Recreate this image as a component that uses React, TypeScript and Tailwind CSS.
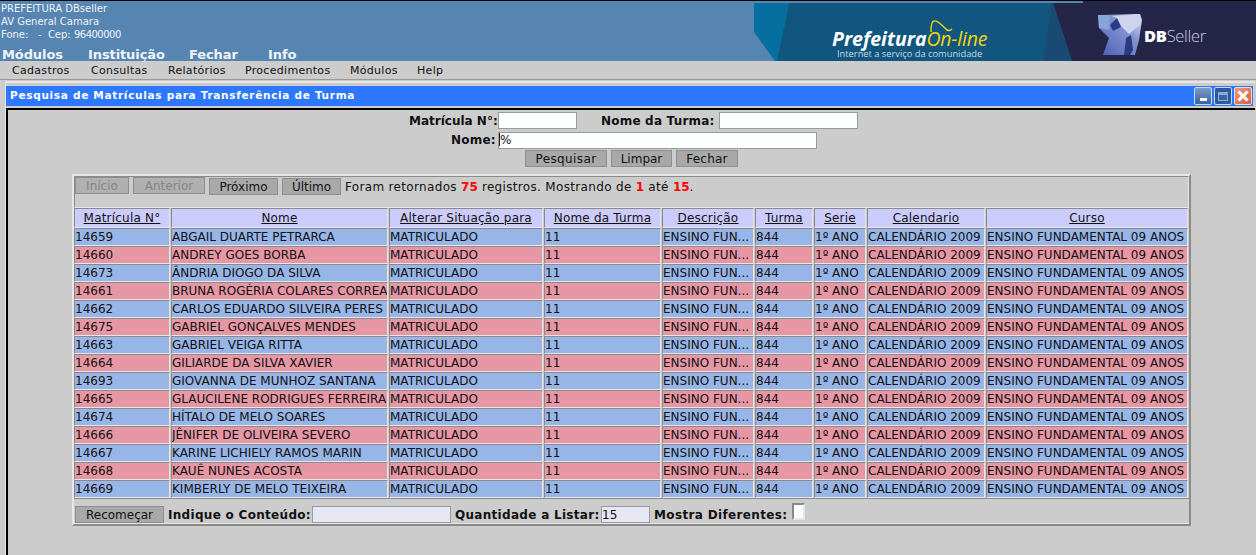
const rows = [
  ["14659", "ABGAIL DUARTE PETRARCA"],
  ["14660", "ANDREY GOES BORBA"],
  ["14673", "ÂNDRIA DIOGO DA SILVA"],
  ["14661", "BRUNA ROGÉRIA COLARES CORREA"],
  ["14662", "CARLOS EDUARDO SILVEIRA PERES"],
  ["14675", "GABRIEL GONÇALVES MENDES"],
  ["14663", "GABRIEL VEIGA RITTA"],
  ["14664", "GILIARDE DA SILVA XAVIER"],
  ["14693", "GIOVANNA DE MUNHOZ SANTANA"],
  ["14665", "GLAUCILENE RODRIGUES FERREIRA"],
  ["14674", "HÍTALO DE MELO SOARES"],
  ["14666", "JÊNIFER DE OLIVEIRA SEVERO"],
  ["14667", "KARINE LICHIELY RAMOS MARIN"],
  ["14668", "KAUÊ NUNES ACOSTA"],
  ["14669", "KIMBERLY DE MELO TEIXEIRA"],
];

const columns = [
  { label: "Matrícula N°", width: "w-[97px]" },
  { label: "Nome", width: "w-[218px]" },
  { label: "Alterar Situação para", width: "w-[155px]" },
  { label: "Nome da Turma", width: "w-[118px]" },
  { label: "Descrição", width: "w-[93px]" },
  { label: "Turma", width: "w-[59px]" },
  { label: "Serie", width: "w-[53px]" },
  { label: "Calendario", width: "w-[119px]" },
  { label: "Curso", width: "w-[203px]" },
];

function PageButton({ label, disabled, className }: { label: string; disabled?: boolean; className: string }) {
  return (
    <button
      className={`h-[17px] shrink-0 border border-[#8f8f8f] text-[12px] leading-none ${
        disabled ? "bg-[#b0b0b0] text-[#858585]" : "bg-[#a8a8a8] text-[#111]"
      } ${className}`}
    >
      {label}
    </button>
  );
}

function Banner() {
  return (
    <div className="relative h-full w-[502px] overflow-hidden bg-[#252647]">
      <svg className="absolute left-0 top-[-1px]" width="502" height="61" viewBox="0 0 502 61">
        <defs>
          <linearGradient id="dbLogo" x1="0" y1="1" x2="1" y2="0">
            <stop offset="0" stopColor="#4a5fb8" />
            <stop offset="0.6" stopColor="#7f90d0" />
            <stop offset="1" stopColor="#dfe3f5" />
          </linearGradient>
        </defs>
        <polygon points="0,0 298,0 318,61 0,61" fill="#11567f" />
        <polygon points="0,0 36,0 23,61 21,61 0,32" fill="#05709f" />
        <polygon points="0,32 21,61 0,61" fill="#5785b2" />
        <polygon points="298,3 318,61 289,61" fill="#1a4a73" />
        <rect x="0" y="0" width="329" height="3" fill="#5785b2" />
        {/* logo DBSeller */}
        <path d="M344 15 L386 14 L388 20 L385 40 L381 55 L349 55 L355 38 L345 28 Z" fill="url(#dbLogo)" />
        <path d="M344 15 L356 15 L355 30 L345 28 Z" fill="#86a5d8" />
        <path d="M358 16 L386 14 L387 24 L375 34 L367 26 L363 18 Z" fill="#cfd4ee" />
        <path d="M356 25 L363 18 L367 27 L359 31 Z" fill="#2b3a86" />
        <path d="M370 55 L372 38 L377 35 L379 50 L376 55 Z" fill="#2d3a7d" />
        {/* onda do On-line */}
        <path d="M177 32 C177 24 178 21 180 21 C184 20 188 26 193 30 C195 31 197 30 198 29" fill="none" stroke="#f2d411" strokeWidth="1.4" />
      </svg>
      <div className="absolute left-[78px] top-[29px] flex h-[18px] items-baseline font-['Open_Sans',sans-serif] italic leading-[18px]">
        <span className="text-[19.5px] font-bold text-white">Prefeitura</span>
        <span className="text-[19.5px] tracking-[-0.2px] text-[#f2d411]">On-line</span>
      </div>
      <p className="absolute left-[83px] top-[47px] font-['Open_Sans',sans-serif] text-[9.3px] leading-[11px] text-[#c8d8e0]">
        Internet a serviço da comunidade
      </p>
      <p className="absolute left-[390px] top-[26px] font-['Open_Sans',sans-serif] text-[16.5px] font-light leading-[18px] tracking-[-0.3px] text-[#c9cce0]">
        <span className="font-extrabold text-white">DB</span>Seller
      </p>
    </div>
  );
}

function WindowButtons() {
  return (
    <div className="flex gap-[2px] pr-[1px]">
      <div className="flex h-[18px] w-[18px] items-end justify-center rounded-[2px] border border-[#c8d8f0] bg-gradient-to-b from-[#7c9cc8] to-[#3d6299] pb-[3px]">
        <div className="h-[3px] w-[7px] bg-white" />
      </div>
      <div className="flex h-[18px] w-[18px] items-center justify-center rounded-[2px] border border-[#c8d8f0] bg-[#2d5a9e]">
        <div className="h-[9px] w-[10px] border border-t-[3px] border-[#8fa8cf] bg-[#3a64a6]" />
      </div>
      <div className="flex h-[18px] w-[18px] items-center justify-center rounded-[2px] border border-[#f0d8d0] bg-gradient-to-br from-[#ec9a7c] to-[#d9603f]">
        <svg width="14" height="14" viewBox="0 0 14 14">
          <path d="M2.5 2.5 L11.5 11.5 M11.5 2.5 L2.5 11.5" stroke="#fff" strokeWidth="3" />
        </svg>
      </div>
    </div>
  );
}

export default function App() {
  return (
    <div className="flex h-[555px] w-[1256px] flex-col overflow-hidden bg-[#cccccc] font-['DejaVu_Sans',sans-serif] text-black">
      {/* cabecalho */}
      <header className="flex h-[61px] shrink-0 justify-between border-t border-black bg-[#5785b2] text-white">
        <div className="pl-[1px]">
          <div className="pt-[1px] text-[10px] leading-[13px] text-[#eef3f8]">
            <p>PREFEITURA DBseller</p>
            <p>AV General Camara</p>
            <p className="whitespace-pre">
              Fone:&nbsp;&nbsp;&nbsp;-&nbsp;&nbsp;Cep: <span className="tracking-[-0.5px]">96400000</span>
            </p>
          </div>
          <nav className="mt-[6px] flex pl-[1px] text-[13px] font-bold leading-[15px] tracking-[-0.1px] text-[#eef3f8]">
            <span className="w-[86px]">Módulos</span>
            <span className="w-[101px]">Instituição</span>
            <span className="w-[79px]">Fechar</span>
            <span>Info</span>
          </nav>
        </div>
        <Banner />
      </header>

      {/* menu */}
      <nav className="flex h-[19px] shrink-0 items-center border-b border-[#9a9a9a] pl-[12px] pt-[3px] text-[11px] tracking-[0.3px] text-[#111]">
        <span className="w-[79px]">Cadastros</span>
        <span className="w-[77px]">Consultas</span>
        <span className="w-[77px]">Relatórios</span>
        <span className="w-[105px]">Procedimentos</span>
        <span className="w-[67px]">Módulos</span>
        <span>Help</span>
      </nav>

      {/* janela */}
      <main className="mt-[1px] mr-[1px] ml-[5px] flex min-h-0 flex-1 flex-col border-t-[2px] border-l border-[#e6e6e6] pt-[3px]">
        <div className="mr-[2px] flex h-[20px] shrink-0 items-center justify-between bg-[#2e78ff] pl-[4px] text-[10.5px] font-bold tracking-[0.7px] text-white">
          <span>Pesquisa de Matrículas para Transferência de Turma</span>
          <WindowButtons />
        </div>
        <div className="mt-[2px] flex flex-1 flex-col border-t-[2px] border-l-[2px] border-black pt-[2px]">
          <form className="flex flex-col text-[12px] font-bold text-[#111]">
            <div className="flex h-[19px] items-start pl-[401px]">
              <label className="w-[89px]">Matrícula N°:</label>
              <input className="h-[17px] w-[79px] border border-[#9a9a9a] bg-[#fbfffd]" />
              <label className="ml-[24px] w-[118px] tracking-[0.2px]">Nome da Turma:</label>
              <input className="h-[17px] w-[139px] border border-[#9a9a9a] bg-[#fbfffd]" />
            </div>
            <div className="flex h-[19px] items-start pl-[443px]">
              <label className="w-[47px] tracking-[0.2px]">Nome:</label>
              <div className="relative">
                <input
                  defaultValue="%"
                  className="h-[17px] w-[319px] border border-[#9a9a9a] bg-[#fbfffd] pl-[1px] text-[12px] font-normal leading-none"
                />
                <div className="absolute left-[1px] top-[2px] h-[13px] w-[1px] bg-[#222]" />
              </div>
            </div>
            <div className="flex gap-[4px] pl-[517px]">
              <PageButton label="Pesquisar" className="w-[82px] font-normal tracking-[0.4px]" />
              <PageButton label="Limpar" className="w-[61px] font-normal" />
              <PageButton label="Fechar" className="w-[62px] font-normal tracking-[0.2px]" />
            </div>
          </form>

          <section className="mt-[7px] ml-[64px] w-[1119px] border-[2px] border-t-[#e6e6e6] border-r-[#8a8a8a] border-b-[#8a8a8a] border-l-[#e6e6e6]">
            <div className="h-[32px] border-t border-l border-r border-b border-t-[#8a8a8a] border-r-[#e6e6e6] border-b-[#e6e6e6] border-l-[#8a8a8a]">
              <div className="flex items-start text-[12px] text-[#111]">
                <PageButton label="Início" disabled className="w-[54px]" />
                <PageButton label="Anterior" disabled className="ml-[4px] w-[72px]" />
                <PageButton label="Próximo" className="mt-[1px] ml-[4px] w-[69px]" />
                <PageButton label="Último" className="mt-[1px] ml-[4px] w-[59px]" />
                <p className="mt-[1px] ml-[4px] tracking-[0.33px]">
                  Foram retornados <b className="tracking-normal text-[#ff0000]">75</b> registros. Mostrando de{" "}
                  <b className="tracking-normal text-[#ff0000]">1</b> até{" "}
                  <b className="tracking-normal text-[#ff0000]">15</b>.
                </p>
              </div>
            </div>

            <div className="flex">
              {columns.map((col) => (
                <div key={col.label} className={`${col.width} shrink-0 pr-[1px]`}>
                  <div className="h-[20px] border border-t-[#8a8a8a] border-r-[#e6e6e6] border-b-[#e6e6e6] border-l-[#8a8a8a] bg-[#ccccff] text-center text-[12px] leading-[19px] tracking-[0.2px] text-[#111] underline">
                    {col.label}
                  </div>
                </div>
              ))}
            </div>

            {rows.map(([id, name], i) => (
              <div key={id} className="flex text-[12px] text-[#111]">
                {[id, name, "MATRICULADO", "11", "ENSINO FUN...", "844", "1º ANO", "CALENDÁRIO 2009", "ENSINO FUNDAMENTAL 09 ANOS"].map(
                  (value, j) => (
                    <div key={j} className={`${columns[j].width} shrink-0 pr-[1px]`}>
                      <div
                        className={`h-[18px] overflow-hidden whitespace-nowrap border border-t-[#8a8a8a] border-r-[#e6e6e6] border-b-[#e6e6e6] border-l-[#8a8a8a] leading-[16px] ${
                          i % 2 === 0 ? "bg-[#97b5e6]" : "bg-[#e796a4]"
                        }`}
                      >
                        {value}
                      </div>
                    </div>
                  ),
                )}
              </div>
            ))}

            <div className="flex h-[26px] items-start border-t border-b border-t-[#8a8a8a] border-b-[#e6e6e6] pt-[7px] text-[12px] font-bold text-[#111]">
              <PageButton label="Recomeçar" className="ml-[1px] w-[89px] font-normal" />
              <label className="ml-[4px] w-[144px] tracking-[0.3px]">Indique o Conteúdo:</label>
              <input className="h-[17px] w-[139px] border border-[#9a9a9a] bg-[#e6e6f5]" />
              <label className="ml-[4px] w-[146px] tracking-[0.3px]">Quantidade a Listar:</label>
              <input
                defaultValue="15"
                className="h-[17px] w-[49px] border border-[#9a9a9a] bg-[#e6e6f5] text-[12px] font-normal"
              />
              <label className="ml-[4px] w-[138px] tracking-[0.35px]">Mostra Diferentes:</label>
              <div className="mt-[-3px] h-[17px] w-[13px] border-[2px] border-t-[#8a8a8a] border-r-[#e6e6e6] border-b-[#e6e6e6] border-l-[#8a8a8a] bg-[#fbfffd]" />
            </div>
          </section>
        </div>
      </main>
    </div>
  );
}
